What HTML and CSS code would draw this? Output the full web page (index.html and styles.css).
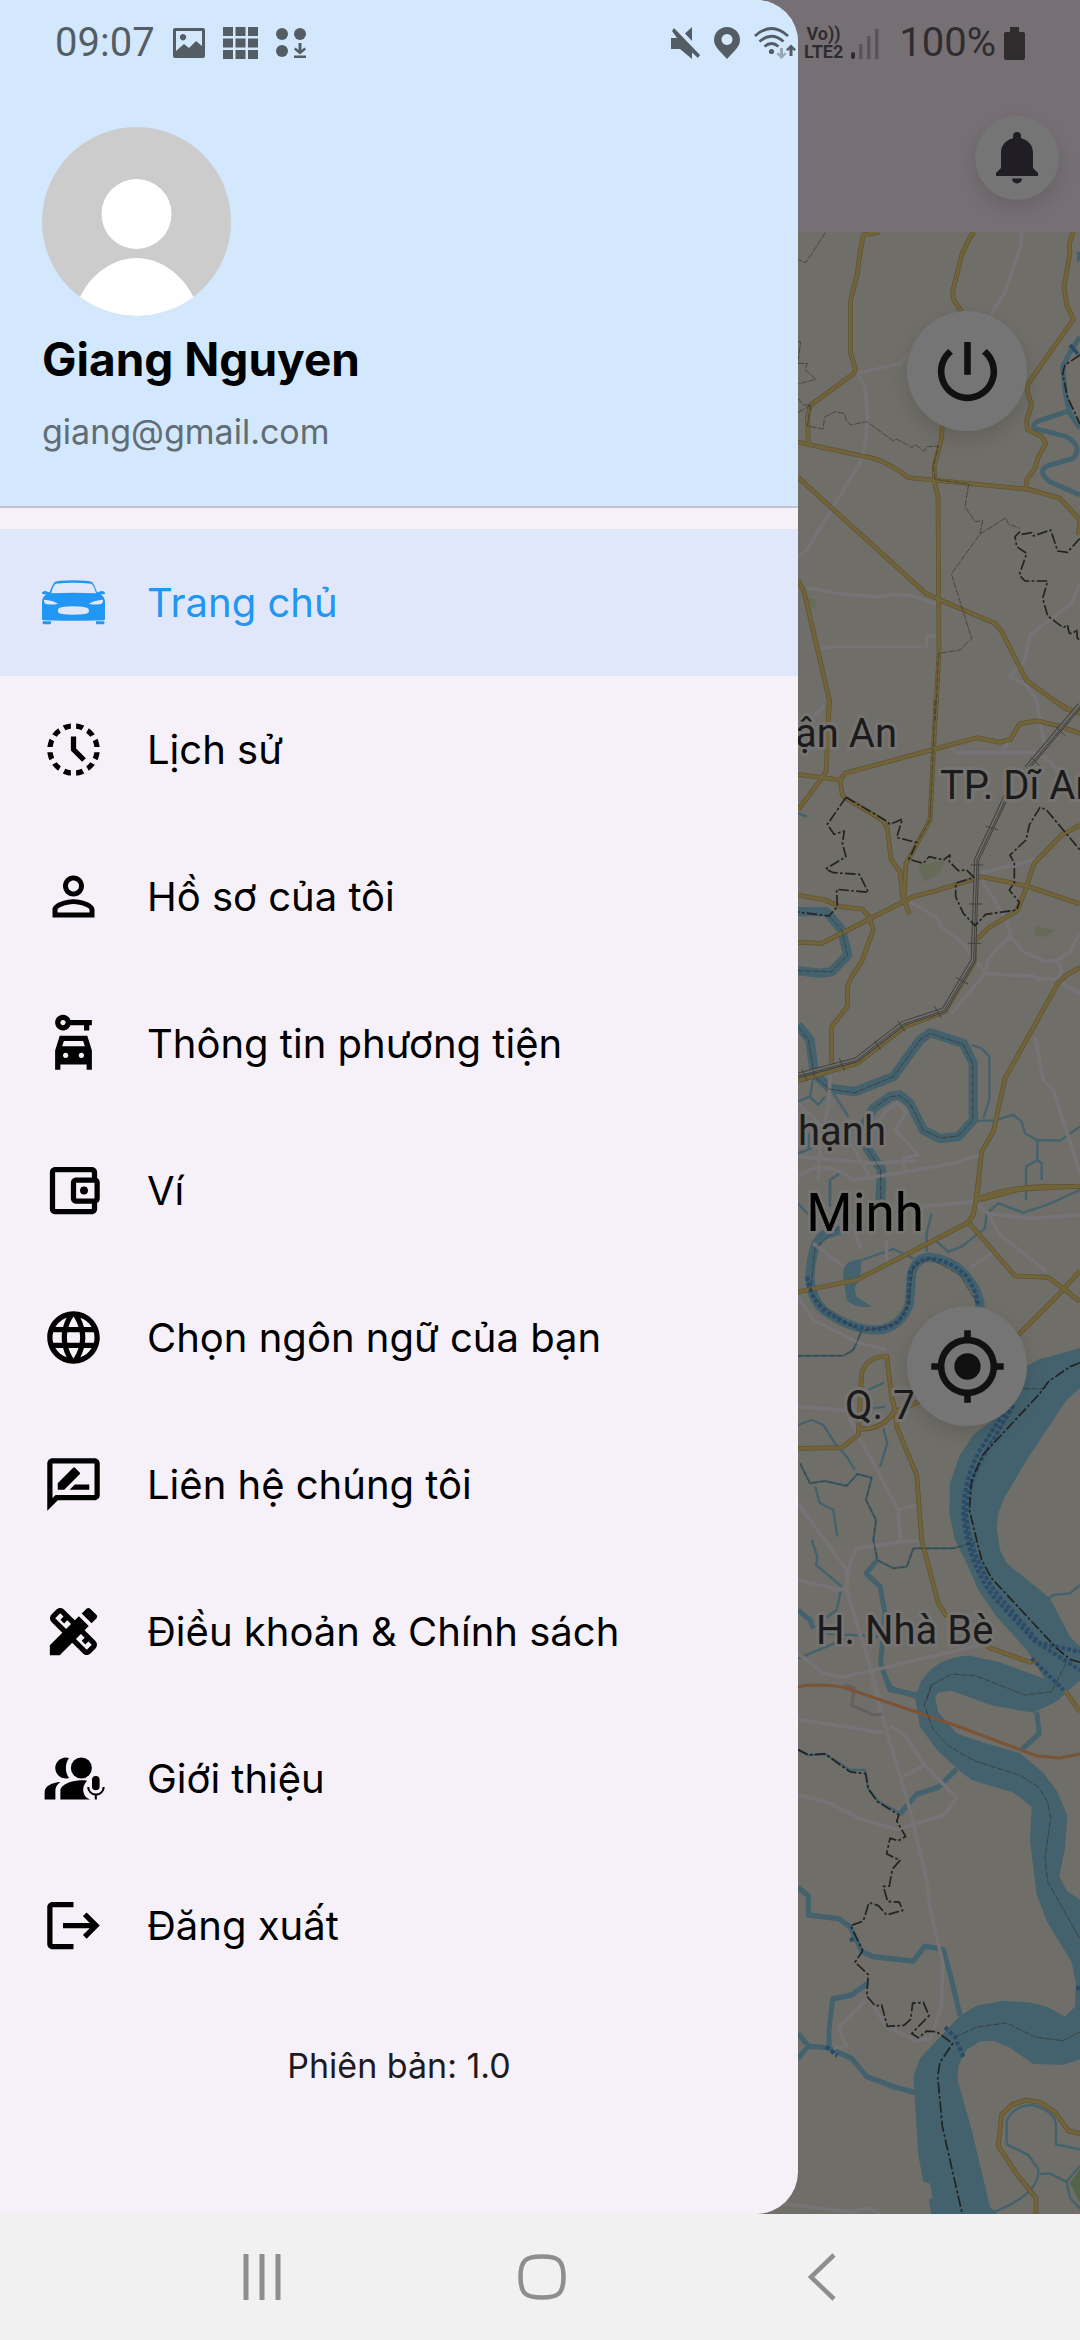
FILE: index.html
```html
<!DOCTYPE html>
<html lang="vi">
<head>
<meta charset="utf-8">
<meta name="viewport" content="width=device-width, initial-scale=1">
<title>Trang chủ</title>
<link rel="stylesheet" href="styles.css">
</head>
<body>
<div class="phone">
  <div class="app">
    <div class="home">
      <header class="topbar">
        <button class="round small" aria-label="Thông báo">
          <svg width="42" height="52" viewBox="0 0 42 52" fill="#201e24"><path d="M21 0a4 4 0 0 1 4 4v2.200C32 8 37 13 37 21V36l5 5v3H0v-3l5-5V21C5 13 10 8 17 6.200V4a4 4 0 0 1 4-4zM16 46.500h10a5 5 0 0 1-10 0z"/></svg>
        </button>
      </header>
      <div class="map">
        <svg class="map-art" viewBox="0 232 1080 1982" preserveAspectRatio="xMaxYMin slice" role="img" aria-label="Bản đồ">
          <defs>
            <g id="roads-a" transform="translate(780 220) scale(.33333)">
              <path d="M300 36L250 45 240 100 232 160 212 240V400L226 445 222 460 92 555 82 590 85 670M54 667L280 715Q330 730 385 773L460 780 745 808 840 835 900 900M582 36L568 55 545 105 518 215 520 238 545 275M487 615L485 655 462 740 464 790 474 830 477 1300 466 1500M54 772L437 1120 480 1140 645 1210 665 1235 740 1382 860 1468 900 1480M54 1080L72 1115 148 1440 145 1500M880 36L868 70 870 100 852 200 860 255 880 298 745 490 742 515 755 555 740 600 742 628 785 650 798 670 775 710 765 745 740 780 738 805M900 900L895 945"/>
            </g>
            <g id="roads-b" transform="translate(780 700) scale(.33333)">
              <path d="M148 0L138 215 118 245 54 330M54 223L180 240 195 220 590 113 660 127 692 118 718 72 772 62 835 78 900 100M180 240L187 285 195 293 310 362 322 385 333 478 360 515 368 590 388 642M468 0L450 360 390 470 378 490 372 600M54 727L125 730 400 590 465 573 605 530 740 558 900 612M54 585L135 600 180 620 245 627 268 650 280 690 245 785 215 830 202 860V920L155 980V1115M54 1142L232 1090 375 980 495 935 583 785V725L630 680 710 633 735 575 762 490 845 405 900 375M900 803L860 825 835 848 675 1135 640 1295 605 1355 588 1500M588 1498Q680 1463 780 1460H900M820 0L860 25 900 40"/>
            </g>
            <g id="roads-c" transform="translate(780 1180) scale(.33333)">
              <path d="M54 335L230 300 560 130 580 105 598 0M598 60L720 28 900 18M568 130L705 288 805 292 850 325 900 365M900 272L835 345 715 465M54 805L185 803 235 765 245 580Q260 530 320 528L335 650 345 690Q310 750 240 747M345 690L350 740 410 885 425 1080 475 1270 500 1310M620 1400L750 1447 770 1438M345 695L430 660M855 1532L900 1595"/>
            </g>
            <g id="roads-d" transform="translate(780 1680) scale(.33333 .35714)">
              <path d="M900 1270L865 1262 825 1210 780 1182 735 1177 695 1190 665 1217 655 1305 710 1383 768 1450V1500"/>
            </g>
          </defs>

          <!-- parks -->
          <g fill="#666b58">
            <path d="M918 865l28-5-8 14-14 8zM1035 926l20 4-10 7-10-2zM808 598l7 2 1 9-6-3z"/>
            <path fill="#536548" d="M1080 2169l-10 14 10 20z"/>
          </g>

          <!-- water -->
          <g class="water">
            <g transform="translate(780 220) scale(.33333)">
              <path class="w16" d="M900 350L868 400 848 440 856 520 870 580 900 625M868 572L770 605Q745 625 790 632L860 650Q910 680 880 715L810 735Q765 750 810 785L900 825M898 95V125"/>
            </g>
            <g transform="translate(780 700) scale(.33333)">
              <path class="w26" d="M54 635H140L185 690 203 765 155 815 120 820 54 812M54 975L90 1020 103 1120 150 1165 225 1175 340 1130 420 1020 450 998 550 1030 580 1090V1260L535 1310 480 1316 430 1290 390 1210 360 1185 330 1190 280 1225 250 1280 262 1345 305 1410 300 1500"/>
              <path class="w8" d="M575 1035L605 1045 628 1070V1200L610 1255M585 1262H640L700 1245 725 1265 735 1300 770 1320 840 1322 900 1280M772 1320V1380L738 1400V1500M772 1380L785 1390V1440M160 1180L205 1250M100 1130L90 1190 115 1215 135 1190M150 1500V1440L180 1420M54 1205L90 1190M54 340L80 350M54 1360L95 1345M86 1300V1345"/>
            </g>
            <g transform="translate(780 1180) scale(.33333)">
              <path class="area" d="M700 580L778 538 900 505V625L860 660 740 840 672 955 655 1000 650 1045 660 1110 680 1150 810 1255 870 1370 900 1400V1502H425Q470 1430 570 1427L660 1447 795 1497 740 1410 650 1310 595 1230 560 1150 525 1080 508 1000 510 910 540 825 580 765 650 710ZM190 290Q185 240 245 238L240 300Q215 320 230 350L275 380Q220 385 200 360Z"/>
              <path class="w26" d="M180 150L130 165Q95 190 90 290 90 350 130 390 230 460 310 448 370 430 388 370L395 280Q410 230 450 232 520 240 560 290 600 340 600 380M305 0L302 60"/>
              <path class="w16" d="M292 1140L258 1180 300 1220 315 1300 302 1450 330 1530 420 1545M54 1290L90 1320 100 1345"/>
              <path class="w8" d="M245 450L220 510 190 527 54 528M245 240L340 207 400 235M440 215V160L455 100M470 185L505 215 545 200 615 145 620 100 655 70 730 98 800 75 900 30M150 0V80M54 70L100 120M54 735L95 720 130 735 165 790 200 830 225 870M310 745L322 790 300 860M60 850L90 910 135 903 200 918 232 882 275 893 258 960 288 1020 280 1080 292 1140 340 1165 380 1160 400 1105H520L590 1085M105 920L120 970 160 990 172 1070M95 1080L112 1130 108 1155 150 1190 185 1220 170 1290 130 1320M120 1360L300 1370M54 1435L200 1375M800 1260L820 1245 870 1240 900 1215M265 630L312 608M278 685L315 680"/>
            </g>
            <g transform="translate(780 1680) scale(.33333 .35714)">
              <path class="area" d="M425 0L405 50 420 130 470 195 540 255 575 280 700 315 755 355 750 450 770 600 800 675 875 790 888 850 885 915 855 942 800 915 750 903 670 898 590 912 540 940 480 1000 420 1060 400 1110 405 1180 415 1330 430 1405 450 1410 458 1450 447 1455 455 1500H655L630 1475 575 1260 533 1120 535 1080 560 1035 600 1012 640 1010 690 1030 760 1075 850 1077 900 1062V615L860 590 838 550 855 470 862 380 830 310 790 260 720 205 610 175 530 150 475 90 465 50 475 35 515 30 640 72 760 92 830 60 900 0Z"/>
              <path class="w16" d="M54 580L85 605V658L175 668 210 690 245 760 280 775 400 787 435 745 490 755 515 840 540 940M360 375L410 320 475 300 530 250M262 850L215 882 158 893 147 980V1030M54 990L85 1025 54 1060M85 1025L145 1030 215 1060 260 1110 345 1140 405 1155M320 0L335 25 410 45M770 90L778 150 725 195"/>
              <path class="w8" d="M54 195L85 210 135 207 210 252H255L265 305 295 340 365 375M640 1490Q780 1440 775 1370L745 1330 680 1300V1235Q700 1190 760 1190 830 1210 828 1250V1300L900 1315M780 1383L810 1382 860 1405 900 1360M860 1405L870 1450 900 1480"/>
            </g>
          </g>

          <!-- minor roads -->
          <g class="minor">
            <path transform="translate(780 220) scale(.33333)" d="M727 36L720 85 675 215 632 285M382 408L355 432 232 460 255 500 263 590 255 680 240 730 80 990 54 1010M80 1103L180 1122 295 1130 340 1122 400 1128 475 1155M120 1285L160 1280H440V1248H475M900 1090L875 1150 750 1245 735 1320 688 1370 740 1395 770 1440 780 1500"/>
            <path transform="translate(780 700) scale(.33333)" d="M135 15L90 60M390 605L450 640 470 650 482 680 545 725 600 800 620 820 680 825 760 828 780 837H835L845 812 832 780M770 0L780 60 795 140M510 145L535 157H760L800 175 840 220M670 157L685 118M603 520L765 478M600 530L680 660 692 710 730 755 795 785 832 780 870 755 900 700M692 710L650 745 625 780 615 820 515 940M845 848L900 880M765 1010L790 1140 820 1170 900 1420M150 1115L148 1200 120 1340 115 1440M54 1210L130 1280M270 1300L320 1230 350 1210 380 1235 345 1290 415 1365 370 1375 375 1420M54 1370L280 1390 410 1382M54 1430Q130 1370 220 1440L350 1420 520 1390 600 1365M200 1310L270 1430"/>
            <path transform="translate(780 1180) scale(.33333)" d="M54 680L250 695M200 700L355 990 362 1085 230 1105 210 1150 200 1220 180 1230 54 1200M54 970L200 1170V1230L300 1560M355 990L410 975M362 1085L420 1082M54 1420L130 1480 190 1492 600 1395M320 90L580 65 625 100 660 165 730 220 800 275M625 100L740 115 900 105M100 190L190 260M215 130L245 210M320 180V250M570 265L640 215M54 350L100 420 240 490 320 510"/>
            <path transform="translate(780 1680) scale(.33333 .35714)" d="M275 0L395 380 440 560 450 640 488 790 485 910 460 985 450 1005 410 1010 320 970 262 890 200 950 175 975 200 1025 160 1030M54 110L310 148M330 130L375 155 430 235 530 330 492 378 350 418 240 388 150 345 54 322M430 240L365 272M-30 1462L215 1490 265 1478 300 1495"/>
          </g>
          <path fill="none" stroke="#626060" stroke-width="3" d="M845 1685l9 3-2 17 22 10 8-1"/>

          <!-- major roads -->
          <g class="casing"><use href="#roads-a"/><use href="#roads-b"/><use href="#roads-c"/><use href="#roads-d"/></g>
          <g class="major"><use href="#roads-a"/><use href="#roads-b"/><use href="#roads-c"/><use href="#roads-d"/></g>
          <path fill="none" stroke="#7a5436" stroke-width="3" d="M798 1687Q813 1683 843 1687L957 1726 1037 1756 1060 1758 1080 1754"/>

          <!-- railway -->
          <g transform="translate(780 700) scale(.33333)" fill="none">
            <path stroke="#40403e" stroke-width="16" d="M54 1126L228 1080 370 970 492 930 580 780 590 480 685 275M740 205L900 15"/>
            <path stroke="#706e6b" stroke-width="10" d="M50 1127L228 1080 370 970 492 930 580 780 590 480 685 275M740 205L900 15"/>
            <path stroke="#40403e" stroke-width="3" d="M54 1128L228 1082 370 972 492 932 581 782 591 480 687 275M740 207L900 18M66 1108l16 34M178 1075l16 36M284 1022l18 28M353 962l22 32M463 918l20 34M528 832l36 20M565 730h38M568 612h38M572 495h38M617 378l38 12M752 172l28 26M828 80l28 28"/>
          </g>

          <!-- ferry lines -->
          <g class="ferry">
            <path transform="translate(780 1180) scale(.33333)" d="M82 290Q90 350 130 390 230 460 310 445 370 430 385 370L390 280Q410 235 450 235 520 245 560 290 590 330 595 380M670 700L600 810Q550 900 550 1000 560 1140 640 1250L760 1380 900 1470M700 675L610 830Q560 920 558 1000 570 1130 650 1240L780 1390 900 1415M755 1435L850 1530"/>
            <path transform="translate(780 1680) scale(.33333 .35714)" d="M495 972L525 1000 550 1055M138 1027L172 1052M210 730L225 722M888 863H900"/>
            <path class="short" d="M1070 345l8 9"/>
          </g>

          <!-- district borders -->
          <g class="border">
            <path transform="translate(780 220) scale(.33333)" d="M136 38L78 128 56 120M54 365H62L54 425M54 430H82L75 450 108 478 54 492M54 535L70 555 92 555 82 618 130 627 133 592 165 575 193 580 200 603 213 615 260 605 340 663 350 657 397 683 405 673 432 694 440 680 475 678 460 740 465 778 566 792 555 860 585 905 608 902 600 942 514 1062 575 1255 540 1290 476 1300 466 1500M600 942L678 893 685 912 720 925M54 578L92 555"/>
            <path transform="translate(780 700) scale(.33333)" d="M466 0L450 360 410 430M147 648L185 690 203 765 155 815 54 812M54 980L85 1020 103 1130 150 1168 225 1178 340 1130 420 1020 450 1000 550 1033 578 1090V1260L535 1308 480 1314 430 1290 390 1210 360 1187 330 1190 280 1225M262 1345L302 1410V1500"/>
            <path transform="translate(780 1180) scale(.33333)" d="M180 140L105 205 92 330Q110 380 245 455L355 430 385 370 400 260 450 235 540 285 590 370M245 455L220 510 190 527H54M60 850L90 910 135 903 200 918 232 882 275 893 258 960 288 1020 280 1080 292 1140 340 1165 380 1160 400 1105 520 1105 590 1085M730 626H790M440 1560L455 1515 515 1482 585 1487 735 1545 815 1535 858 1450"/>
            <path transform="translate(780 1680) scale(.33333 .35714)" d="M455 12L433 70 460 140 510 187 580 225 720 267 775 300 802 340 812 385 795 500 803 565 900 725M525 1000L590 972 680 960 765 1000 850 1010 900 985"/>
          </g>

          <!-- province borders -->
          <g class="border strong">
            <path transform="translate(780 220) scale(.33333)" d="M900 405L855 435 848 460 862 530 900 612M720 935L705 950 710 980 740 1000 718 1065 735 1083H803L788 1135 803 1188 850 1223 862 1215 868 1240 880 1240 890 1228 892 1255 900 1260M725 943L755 938 760 948 812 930 833 993 862 997 900 955"/>
            <path transform="translate(780 700) scale(.33333)" d="M198 292L142 373 162 403 193 393 187 430 198 470 137 507 160 518 238 523 265 577 170 568 172 620 147 648 54 636M198 292L318 362 330 373 367 357 350 412 410 428 387 478 430 490 447 470 490 480 510 465 508 485 535 512 560 510 582 532 527 550V590L550 640 585 677 617 643 710 630 718 607 688 570 703 548V490L690 465 738 420 748 375 780 322 798 328 900 450"/>
            <path transform="translate(780 1180) scale(.33333)" d="M900 548L870 560 805 605 780 640 608 825 575 900 568 990 605 1140 635 1195 830 1405 870 1438 900 1447"/>
            <path transform="translate(780 1680) scale(.33333 .35714)" d="M54 195L85 210 135 207 210 257 257 262 265 305 292 340 357 378 350 395 377 438 355 450 330 443 320 487 360 505 337 530 328 577 310 578 323 620 358 622 368 645 320 658 295 632 267 623 250 675 212 688 248 758 225 790 265 825 260 885 285 912 305 910 322 970 372 967 392 950 398 905 430 903 447 940 395 990 415 1002 440 983 470 985 518 1018 480 1070 473 1110 487 1250 548 1500"/>
          </g>

          <!-- place names -->
          <g class="place">
            <text x="897" y="747" text-anchor="end">Thuận An</text>
            <text x="940" y="799">TP. Dĩ An</text>
            <text x="886" y="1145" text-anchor="end">Bình Thạnh</text>
            <text class="city" x="924" y="1231" text-anchor="end">Hồ Chí Minh</text>
            <text x="845" y="1419">Q. 7</text>
            <text x="816" y="1644">H. Nhà Bè</text>
          </g>
        </svg>
        <button class="round power" aria-label="Bật nhận chuyến">
          <svg width="79" height="79" viewBox="0 0 24 24" fill="#111"><path d="M13 3h-2v10h2V3zm4.830 2.170l-1.420 1.420C17.990 7.860 19 9.810 19 12c0 3.870-3.130 7-7 7s-7-3.130-7-7c0-2.190 1.010-4.140 2.580-5.420L6.170 5.170C4.230 6.820 3 9.260 3 12c0 4.970 4.030 9 9 9s9-4.030 9-9c0-2.740-1.230-5.180-3.170-6.830z"/></svg>
        </button>
        <button class="round locate" aria-label="Vị trí của tôi">
          <svg width="79" height="79" viewBox="0 0 24 24" fill="#111"><path d="M12 8c-2.210 0-4 1.790-4 4s1.790 4 4 4 4-1.790 4-4-1.790-4-4-4zm8.940 3c-.46-4.170-3.770-7.480-7.940-7.940V1h-2v2.060C6.830 3.520 3.520 6.830 3.060 11H1v2h2.060c.46 4.170 3.770 7.480 7.940 7.940V23h2v-2.060c4.170-.46 7.480-3.770 7.940-7.940H23v-2h-2.060zM12 19c-3.870 0-7-3.130-7-7s3.130-7 7-7 7 3.130 7 7-3.130 7-7 7z"/></svg>
        </button>
      </div>
    </div>

    <aside class="drawer">
      <div class="profile">
        <svg class="avatar" viewBox="0 0 189 189"><circle cx="94.500" cy="94.500" r="94.500" fill="#ccc"/><circle cx="94.500" cy="87" r="35" fill="#fff"/><path fill="#fff" d="M38 170C50 145 73 131 94.500 131s44.500 14 57 39a94.500 94.500 0 0 1-113.500 0z"/></svg>
        <div class="name">Giang Nguyen</div>
        <div class="email">giang@gmail.com</div>
      </div>
      <nav class="menu">
        <a class="item active" href="#home" aria-current="page">
          <svg viewBox="66 92 189 189"><path fill-rule="evenodd" d="M66 157q2-5 10-5 5 0 7 3l6 1q7-22 15-31 10-5 56-5t56 5q8 9 15 31l6-1q2-3 8-3 8 0 10 5v3q-8 3-14 1 14 9 14 25v50q0 4-5 4l-60 1H131l-60-1q-5 0-5-4v-50q0-16 14-25-6 2-14-1zM94 159q66-3 134 0-5-21-14-29-54-6-107 0-9 8-13 29zM72 178q-1 12 10 14 18 2 32-2-16-11-42-12zM249 178q1 12-10 14-18 2-32-2 16-11 42-12zM116 204q-5 8 0 14 10 5 44 5t44-5q6-6 0-14-10-6-44-6t-44 6zM68 243h25v6q0 3-3 3H71q-3 0-3-3zM228 243h25v6q0 3-3 3h-19q-3 0-3-3z"/></svg>
          <span>Trang chủ</span>
        </a>
        <a class="item" href="#history">
          <svg viewBox="0 0 24 24"><path d="M15.100,19.370l1,1.740c-0.960,0.440-2.010,0.730-3.100,0.840v-2.020C13.740,19.840,14.440,19.650,15.100,19.370z M4.070,13H2.050 c0.110,1.100,0.400,2.140,0.840,3.100l1.740-1C4.350,14.440,4.160,13.740,4.070,13z M15.100,4.630l1-1.740C15.140,2.450,14.100,2.160,13,2.050v2.020 C13.740,4.160,14.440,4.350,15.100,4.630z M19.930,11h2.020c-0.110-1.100-0.400-2.140-0.840-3.100l-1.740,1C19.650,9.560,19.840,10.260,19.930,11z M8.900,19.370l-1,1.740c0.960,0.440,2.010,0.730,3.100,0.840v-2.020C10.260,19.840,9.560,19.650,8.900,19.370z M11,4.070V2.050 c-1.100,0.110-2.140,0.400-3.100,0.840l1,1.740C9.560,4.350,10.260,4.160,11,4.070z M18.360,7.170l1.740-1.010c-0.630-0.870-1.400-1.640-2.270-2.270 l-1.010,1.740C17.410,6.080,17.920,6.590,18.360,7.170z M4.630,8.900l-1.740-1C2.450,8.860,2.160,9.900,2.050,11h2.020C4.160,10.260,4.350,9.560,4.630,8.900z M19.930,13c-0.090,0.740-0.280,1.440-0.560,2.100l1.740,1c0.440-0.960,0.730-2.010,0.840-3.100H19.930z M16.830,18.360l1.010,1.740 c0.870-0.630,1.640-1.400,2.270-2.270l-1.740-1.010C17.920,17.410,17.410,17.920,16.830,18.360z M7.170,5.640L6.170,3.890 C5.290,4.530,4.530,5.290,3.900,6.170l1.740,1.010C6.080,6.590,6.590,6.080,7.170,5.640z M5.640,16.830L3.900,17.830c0.630,0.870,1.400,1.640,2.270,2.270 l1.010-1.740C6.590,17.920,6.080,17.410,5.640,16.830z M13,7h-2v5.410l4.290,4.290l1.410-1.410L13,11.590V7z"/></svg>
          <span>Lịch sử</span>
        </a>
        <a class="item" href="#profile">
          <svg viewBox="0 0 24 24"><path d="M12 5.900c1.160 0 2.100.94 2.100 2.100s-.94 2.100-2.100 2.100S9.900 9.160 9.900 8s.94-2.100 2.100-2.100m0 9c2.970 0 6.100 1.460 6.100 2.100v1.100H5.900V17c0-.64 3.130-2.100 6.100-2.100M12 4C9.790 4 8 5.790 8 8s1.790 4 4 4 4-1.790 4-4-1.790-4-4-4zm0 9c-2.670 0-8 1.340-8 4v3h16v-3c0-2.660-5.330-4-8-4z"/></svg>
          <span>Hồ sơ của tôi</span>
        </a>
        <a class="item" href="#vehicle">
          <svg viewBox="0 0 24 24"><path fill-rule="evenodd" d="M10.830,3C10.410,1.830,9.300,1,8,1C6.340,1,5,2.340,5,4c0,1.650,1.340,3,3,3c1.300,0,2.410-0.840,2.830-2H16v2h2V5h1V3H10.830z M8,5 C7.450,5,7,4.550,7,4s0.450-1,1-1s1,0.450,1,1S8.550,5,8,5zM17.250 9H6.750L5 14.690V22h2v-2h10v2h2v-7.310zM8.330 11h7.340l.65 2H7.680zM9 15.500a1 1 0 1 0 .01 0zM15 15.500a1 1 0 1 0 .01 0z"/></svg>
          <span>Thông tin phương tiện</span>
        </a>
        <a class="item" href="#wallet">
          <svg viewBox="0 0 24 24"><path d="M21 7.280V5c0-1.100-.9-2-2-2H5c-1.110 0-2 .9-2 2v14c0 1.100.89 2 2 2h14c1.100 0 2-.9 2-2v-2.280c.59-.35 1-.98 1-1.720V9c0-.74-.41-1.370-1-1.720zM20 9v6h-7V9h7zM5 19V5h14v2h-6c-1.100 0-2 .9-2 2v6c0 1.100.9 2 2 2h6v2H5z"/><circle cx="16" cy="12" r="1.500"/></svg>
          <span>Ví</span>
        </a>
        <a class="item" href="#language">
          <svg viewBox="0 0 24 24"><path d="M11.990 2C6.470 2 2 6.480 2 12s4.470 10 9.990 10C17.520 22 22 17.520 22 12S17.520 2 11.990 2zm6.930 6h-2.950c-.32-1.250-.78-2.450-1.380-3.560 1.840.63 3.370 1.910 4.330 3.560zM12 4.040c.83 1.200 1.480 2.530 1.910 3.960h-3.820c.43-1.430 1.080-2.760 1.910-3.960zM4.260 14C4.100 13.360 4 12.690 4 12s.1-1.360.26-2h3.380c-.08.66-.14 1.320-.14 2s.06 1.340.14 2H4.260zm.82 2h2.950c.32 1.250.78 2.450 1.380 3.560-1.840-.63-3.370-1.900-4.330-3.560zm2.950-8H5.080c.96-1.660 2.490-2.930 4.330-3.560C8.810 5.550 8.350 6.750 8.030 8zM12 19.960c-.83-1.200-1.480-2.530-1.910-3.960h3.820c-.43 1.430-1.080 2.760-1.910 3.960zM14.340 14H9.660c-.09-.66-.16-1.320-.16-2s.07-1.350.16-2h4.680c.09.65.16 1.320.16 2s-.07 1.340-.16 2zm.25 5.560c.6-1.110 1.060-2.310 1.380-3.560h2.950c-.96 1.650-2.490 2.930-4.330 3.560zM16.360 14c.08-.66.14-1.320.14-2s-.06-1.340-.14-2h3.380c.16.64.26 1.310.26 2s-.1 1.360-.26 2h-3.380z"/></svg>
          <span>Chọn ngôn ngữ của bạn</span>
        </a>
        <a class="item" href="#contact">
          <svg viewBox="0 0 24 24"><path d="M20 2H4c-1.100 0-1.990.9-1.990 2L2 22l4-4h14c1.100 0 2-.9 2-2V4c0-1.100-.9-2-2-2zm0 14H5.170L4 17.170V4h16v12zM10.500 14H18v-2h-5.500zM6 14h2.470l5.880-5.880c.2-.2.2-.51 0-.71l-1.770-1.770c-.2-.2-.51-.2-.71 0L6 11.530V14z"/></svg>
          <span>Liên hệ chúng tôi</span>
        </a>
        <a class="item" href="#terms">
          <svg viewBox="0 0 24 24"><path d="M16.240,11.510l1.570-1.570l-3.750-3.750l-1.570,1.570L8.350,3.630c-0.780-0.780-2.050-0.780-2.830,0l-1.900,1.900 c-0.780,0.780-0.780,2.050,0,2.830l4.130,4.130L3,17.250V21h3.750l4.760-4.760l4.130,4.130c0.950,0.950,2.230,0.600,2.830,0l1.900-1.900 c0.780-0.780,0.780-2.050,0-2.830L16.240,11.510z M9.180,11.070L5.040,6.940l1.890-1.900c0,0,0,0,0,0l1.270,1.270L7.020,7.500l1.410,1.410l1.190-1.190 l1.450,1.450L9.180,11.070z M17.060,18.960l-4.130-4.130l1.900-1.900l1.450,1.450l-1.190,1.190l1.410,1.410l1.190-1.190l1.270,1.270L17.060,18.960z M20.710,7.040c0.390-0.390,0.390-1.020,0-1.410l-2.340-2.340c-0.470-0.470-1.120-0.290-1.410,0l-1.830,1.830l3.750,3.750L20.710,7.040z"/></svg>
          <span>Điều khoản &amp; Chính sách</span>
        </a>
        <a class="item" href="#about">
          <svg viewBox="0 0 24 24"><circle cx="15" cy="8" r="4"/><path d="M10.300 4.200A4 4 0 1 0 10.300 11.800Q9.100 10.200 9.100 8T10.300 4.200zM1 20v-3c0-2.100 3-3.500 6-3.700-1.300 1-1.900 2-1.900 3.400V20zM7 20v-3.200c0-2.700 4.900-4.100 8-4.100.8 0 1.500.05 2.200.2-2.300 2.100-2 6.200 1.200 7.100zM20.500 11a1.450 1.450 0 0 1 1.450 1.450V15a1.450 1.450 0 0 1-2.900 0v-2.550A1.450 1.450 0 0 1 20.500 11z"/><path fill="none" stroke="#000" stroke-width=".8" d="M17.600 15.200a2.950 2.950 0 0 0 5.900 0M20.500 18v2"/></svg>
          <span>Giới thiệu</span>
        </a>
        <a class="item" href="#logout">
          <svg viewBox="0 0 24 24"><path d="M12 3H4c-1.100 0-2 .9-2 2v14c0 1.100.9 2 2 2h8v-2H4V5h8zM8 11v2h10.170l-2.580 2.590L17 17l5-5-5-5-1.410 1.410L18.170 11z"/></svg>
          <span>Đăng xuất</span>
        </a>
      </nav>
      <p class="version">Phiên bản: 1.0</p>
    </aside>

    <div class="status">
      <span class="digits">09:07</span>
      <svg width="32" height="30" viewBox="0 0 32 30"><path fill-rule="evenodd" d="M2 0h28q2 0 2 2v26q0 2-2 2H2q-2 0-2-2V2Q0 0 2 0zM3 3v20l8-7 5 4 7-7 6 5V3zM10 6a3.200 3.200 0 1 0 .01 0z"/></svg>
      <svg width="35" height="32" viewBox="0 0 35 32"><path d="M0 0h10v9H0zM12.500 0h10v9h-10zM25 0h10v9H25zM0 11.500h10v9H0zM12.500 11.500h10v9h-10zM25 11.500h10v9H25zM0 23h10v9H0zM12.500 23h10v9h-10zM25 23h10v9H25z"/></svg>
      <svg width="30" height="32" viewBox="0 0 30 32"><circle cx="6" cy="7" r="6"/><circle cx="24" cy="7" r="6"/><circle cx="6" cy="24" r="6"/><path d="M22.500 16h3v7l3-2.500 1.500 2-6 5-6-5 1.500-2 3 2.500zM18 28.500h12V31H18z"/></svg>
      <div class="status-right">
        <svg class="spaced" width="29" height="32" viewBox="0 0 29 32"><path d="M3 1L29 28l-2 3-6-5.500V32L9 22H0V11h6L1 4zM21 0v14l-7-7.500z"/></svg>
        <svg class="spaced" width="26" height="32" viewBox="0 0 26 32"><path fill-rule="evenodd" d="M13 0a13 13 0 0 1 13 13c0 7-7 12-13 19C7 25 0 20 0 13A13 13 0 0 1 13 0zM13 7a5.500 5.500 0 1 0 .01 0z"/></svg>
        <svg width="42" height="32" viewBox="0 0 42 32"><path fill="none" stroke="#000" stroke-width="2.800" d="M1 9Q17.500-6 34 9M5.500 14.500q12-10.500 24 0M10.500 19.500q7-6 14 0"/><circle cx="17.500" cy="24.500" r="2.600"/><path opacity=".45" d="M26 21h3v6l2-1.500 1.500 1.500-5 5-5-5 1.500-1.500 2 1.500z"/><path d="M35.500 29h3v-6.500l2 1.500 1.500-1.500-5-5-5 5 1.500 1.500 2-1.500z"/></svg>
        <span class="lte">Vo))<br>LTE2</span>
        <svg width="28" height="32" viewBox="0 0 28 32"><rect x="0" y="25" width="4" height="7" rx="2"/><path opacity=".4" d="M8 17h3.500v15H8zM16 9h3.500v23H16zM24 2h3.500v30H24z"/></svg>
        <span class="digits pct">100%</span>
        <svg width="21" height="33" viewBox="0 0 21 33"><path d="M6 0h9v5h4q2 0 2 2v24q0 2-2 2H2q-2 0-2-2V7q0-2 2-2h4z"/></svg>
      </div>
    </div>
  </div>

  <div class="navbar">
    <button aria-label="Gần đây"><svg width="38" height="46" viewBox="0 0 38 46"><path stroke-width="5" d="M3 0V46M19 0V46M35 0V46"/></svg></button>
    <button aria-label="Màn hình chính"><svg width="48" height="46" viewBox="0 0 48 46"><path stroke-width="4.500" d="M24 2.500C40 2.500 45.500 6 45.500 23S40 43.500 24 43.500 2.500 40 2.500 23 8 2.500 24 2.500z"/></svg></button>
    <button aria-label="Quay lại"><svg width="28" height="48" viewBox="0 0 28 48"><path stroke-width="4.500" d="M26 2L3 24 26 46"/></svg></button>
  </div>
</div>
</body>
</html>
```
FILE: styles.css
```css
* { box-sizing: border-box; }

body {
  margin: 0;
  font-family: Inter, "Noto Sans", sans-serif;
  color: #000;
}

button {
  border: 0;
  padding: 0;
  cursor: pointer;
}

svg { display: block; }

.phone {
  display: flex;
  flex-direction: column;
  min-height: 100vh;
}

.app {
  position: relative;
  flex: 1;
  display: flex;
  overflow: hidden;
}

/* Home screen, dimmed while the drawer is open */
.home {
  flex: 1;
  display: flex;
  flex-direction: column;
  background: #767074;
}

.topbar {
  display: flex;
  justify-content: flex-end;
  height: 232px;
  padding: 116px 21px 0;
}

.round {
  display: flex;
  align-items: center;
  justify-content: center;
  width: 120px;
  height: 120px;
  border-radius: 50%;
  background: #757575;
  box-shadow: 0 8px 20px rgba(0, 0, 0, .12);
}

.round.small {
  width: 84px;
  height: 84px;
}

.map {
  position: relative;
  flex: 1;
  background: #6f6e68;
}

.map-art {
  position: absolute;
  inset: 0;
  width: 100%;
  height: 100%;
}

.power,
.locate {
  position: absolute;
  right: 53px;
}

.power { top: 79px; }
.locate { bottom: 788px; }

/* Map layers */
.water path,
.minor path,
.casing,
.major,
.ferry path,
.border path {
  fill: none;
  stroke-linejoin: round;
}

.water path { stroke: #44626d; }
.water .area { fill: #44626d; stroke: none; }
.water .w8 { stroke-width: 7; }
.water .w16 { stroke-width: 15; }
.water .w26 { stroke-width: 28; }
.minor path { stroke: #757376; stroke-width: 11; }
.casing { stroke: #5f5130; stroke-width: 14; }
.major { stroke: #71643a; stroke-width: 10; }
.ferry path { stroke: #2b4b69; stroke-width: 12; stroke-dasharray: 12 6; }
.ferry .short { stroke-width: 4; }
.border path { stroke: #33322f; stroke-width: 2; stroke-dasharray: 20 4; }
.border.strong path { stroke: #222; stroke-width: 5; stroke-dasharray: 32 7 8 7; }

.place {
  font: 40px Roboto, sans-serif;
  fill: #1b1b1b;
  stroke: #757472;
  stroke-width: 6px;
  stroke-linejoin: round;
  paint-order: stroke;
}

.place .city {
  font-size: 53px;
  fill: #000;
}

/* Drawer */
.drawer {
  position: absolute;
  inset: 0 auto 0 0;
  width: 798px;
  max-width: 100%;
  overflow: hidden;
  border-radius: 0 42px 42px 0;
  background: #f6f1f9;
}

.profile {
  padding: 127px 42px 52px;
  border-bottom: 2px solid #c4c0cf;
  background: #d3e8fc;
}

.avatar {
  width: 189px;
  height: 189px;
}

.name {
  margin-top: 13px;
  font-size: 46px;
  font-weight: 700;
  line-height: 60px;
}

.email {
  margin-top: 21px;
  color: #616c75;
  font-size: 34px;
  line-height: 44px;
}

.menu { margin-top: 21px; }

.item {
  display: flex;
  align-items: center;
  gap: 42px;
  height: 147px;
  padding: 0 42px;
  color: #000;
  font-size: 40px;
  line-height: 60px;
  text-decoration: none;
}

.item svg {
  width: 63px;
  height: 63px;
  fill: currentColor;
}

.item.active {
  background: #e1e7fa;
  color: #2196f3;
}

.version {
  margin: 45px 0 0;
  color: #1d1b20;
  font-size: 34px;
  line-height: 44px;
  text-align: center;
}

/* Status bar, drawn over both the drawer and the home screen */
.status {
  position: absolute;
  inset: 0 0 auto;
  display: flex;
  align-items: center;
  gap: 18px;
  height: 86px;
  padding: 0 55px;
  opacity: .6;
  font-family: Roboto, sans-serif;
}

.digits {
  font-size: 40px;
  line-height: 48px;
}

.status-right {
  display: flex;
  align-items: center;
  gap: 8px;
  margin-left: auto;
}

.spaced { margin-right: 6px; }

.lte {
  font-size: 18px;
  font-weight: 700;
  line-height: 18px;
  text-align: center;
}

.pct { margin-left: 12px; }

/* System navigation */
.navbar {
  display: flex;
  justify-content: center;
  height: 126px;
  padding-left: 4px;
  background: #f1f1f1;
}

.navbar button {
  display: flex;
  align-items: center;
  justify-content: center;
  width: 280px;
  background: none;
}

.navbar svg {
  fill: none;
  stroke: #8e8e8e;
}
```
